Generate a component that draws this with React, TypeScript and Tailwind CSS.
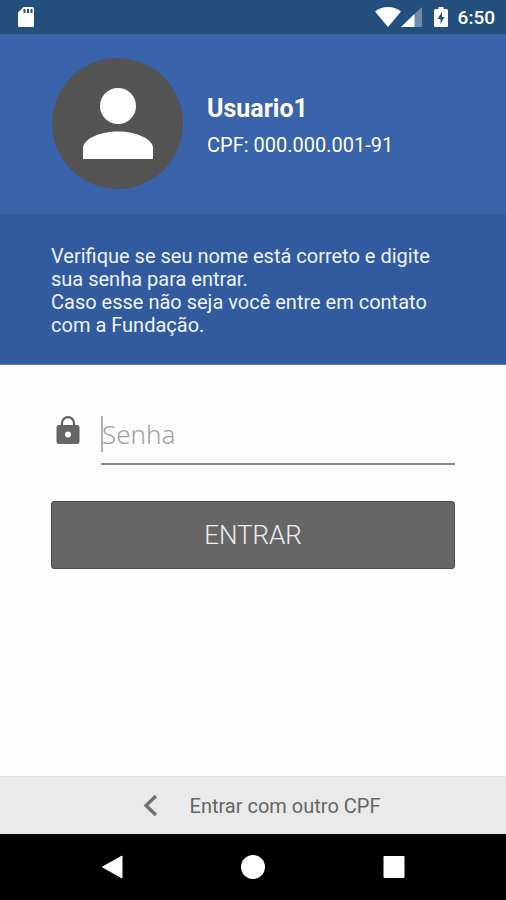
import { useState } from 'react';

const messageLines = [
  'Verifique se seu nome está correto e digite sua senha para entrar.',
  'Caso esse não seja você entre em contato com a Fundação.',
];

const StatusBar: React.FC = () => (
  <div className="flex h-[34px] items-center justify-between bg-[#244f7d] pl-[17px] pr-[11px] text-white">
    <svg className="h-[22px] w-[18px]" viewBox="0 0 18 22" aria-hidden="true">
      <path d="M6.5 1H15.5Q17 1 17 2.5V19.5Q17 21 15.5 21H2.5Q1 21 1 19.5V6.5Z" fill="currentColor" />
      <path d="M6.5 3h2v4h-2zM10 3h2v4h-2zM13.5 3h2v4h-2z" fill="#244f7d" />
    </svg>
    <div className="flex items-center">
      <svg className="h-[22px] w-[26px]" viewBox="0 0 26 22" aria-hidden="true">
        <path d="M0 5.5C3.5 2.5 8 1 13 1s9.5 1.5 13 4.5L13 21Z" fill="currentColor" />
      </svg>
      <svg className="h-[22px] w-[21px]" viewBox="0 0 21 22" aria-hidden="true">
        <path d="M0 21L21 1V21Z" fill="currentColor" opacity="0.35" />
        <path d="M0 21L13.5 8V21Z" fill="currentColor" />
      </svg>
      <svg className="ml-3 h-[22px] w-[14px]" viewBox="0 0 14 22" aria-hidden="true">
        <path d="M4.5 1h5v2H12.5Q14 3 14 4.5V19.5Q14 21 12.5 21H1.5Q0 21 0 19.5V4.5Q0 3 1.5 3H4.5Z" fill="currentColor" />
        <path d="M8 6L3.5 13H6.5V18L10.5 11H8Z" fill="#244f7d" />
      </svg>
      <span className="ml-2.5 pt-0.5 text-[19px] leading-6 font-medium">6:50</span>
    </div>
  </div>
);

const UserHeader: React.FC = () => (
  <header className="flex h-[180px] items-center bg-[#3963aa] px-[52px] pb-0.5 text-white">
    <div className="flex size-[131px] shrink-0 items-center justify-center rounded-full bg-[#545454]">
      <svg className="size-[72px]" viewBox="0 0 72 72" aria-hidden="true">
        <circle cx="36" cy="19" r="18" fill="white" />
        <path d="M1 72V61C1 52 18 44.5 36 44.5S71 52 71 61V72Z" fill="white" />
      </svg>
    </div>
    <div className="ml-6 pt-1">
      <h1 className="text-[25px] leading-8 font-bold">Usuario1</h1>
      <p className="mt-2 text-xl leading-6">CPF: 000.000.001-91</p>
    </div>
  </header>
);

const NavigationBar: React.FC = () => (
  <nav className="flex h-[66px] items-center justify-around bg-black px-[42px] text-white">
    <button type="button" aria-label="Voltar">
      <svg className="size-6" viewBox="0 0 24 24" aria-hidden="true">
        <path d="M2.5 12L22 1V23Z" fill="currentColor" stroke="currentColor" strokeWidth="1" strokeLinejoin="round" />
      </svg>
    </button>
    <button type="button" aria-label="Início">
      <svg className="size-6" viewBox="0 0 24 24" aria-hidden="true">
        <circle cx="12" cy="12" r="12" fill="currentColor" />
      </svg>
    </button>
    <button type="button" aria-label="Recentes">
      <svg className="size-6" viewBox="0 0 24 24" aria-hidden="true">
        <rect x="1.5" y="1" width="21" height="22" rx="1" fill="currentColor" />
      </svg>
    </button>
  </nav>
);

export default function App() {
  const [password, setPassword] = useState('');

  return (
    <div className="flex min-h-screen flex-col bg-[#fdfdfd] font-['Roboto',sans-serif]">
      <StatusBar />
      <UserHeader />
      <section className="border-b border-[#6678ae] bg-[#315b9e] px-[51px] pt-[31px] pb-[27px] text-xl leading-[23px] text-[#eef3fc]">
        {messageLines.map((line) => (
          <p key={line}>{line}</p>
        ))}
      </section>
      <form
        className="flex grow flex-col px-[51px] pt-[51px]"
        onSubmit={(event) => event.preventDefault()}
      >
        <div className="flex items-start">
          <label htmlFor="password" aria-label="Senha" className="w-[50px] shrink-0 pl-[5px]">
            <svg className="h-[30px] w-6" viewBox="0 0 24 30" aria-hidden="true">
              <path d="M6 11V7a6 5.800 0 0 1 12 0V11" fill="none" stroke="#606060" strokeWidth="2.2" />
              <rect x="0.5" y="9" width="23" height="19" rx="2.5" fill="#666666" />
              <circle cx="12" cy="18.5" r="3" fill="#fdfdfd" />
            </svg>
          </label>
          <div className="relative flex min-w-0 grow border-b-2 border-[#8a8a8a] pb-[11px]">
            {password === '' && <span className="absolute top-0 left-0 h-9 w-0.5 bg-[#b0b0b0]" />}
            <input
              id="password"
              type="password"
              placeholder="Senha"
              value={password}
              onChange={(event) => setPassword(event.target.value)}
              className="h-9 w-full min-w-0 px-px font-['Noto_Sans',sans-serif] text-[26px] font-light text-[#555555] outline-none placeholder:text-[#a0a0a0]"
            />
          </div>
        </div>
        <button
          type="submit"
          className="mt-9 h-[68px] rounded-[3px] border border-[#4d4d4d] bg-[#666666] text-[26px] font-light text-[#f0f0f0]"
        >
          ENTRAR
        </button>
      </form>
      <a
        href="#outro-cpf"
        className="flex h-[58px] items-center justify-center border-t border-[#e0e0e0] bg-[#eaeaea] pl-4 text-xl text-[#646464]"
      >
        <svg className="mr-8 h-[22px] w-4" viewBox="0 0 16 22" aria-hidden="true">
          <path d="M14 1L4 10.5L14 20" fill="none" stroke="#707070" strokeWidth="3.4" />
        </svg>
        Entrar com outro CPF
      </a>
      <NavigationBar />
    </div>
  );
}
